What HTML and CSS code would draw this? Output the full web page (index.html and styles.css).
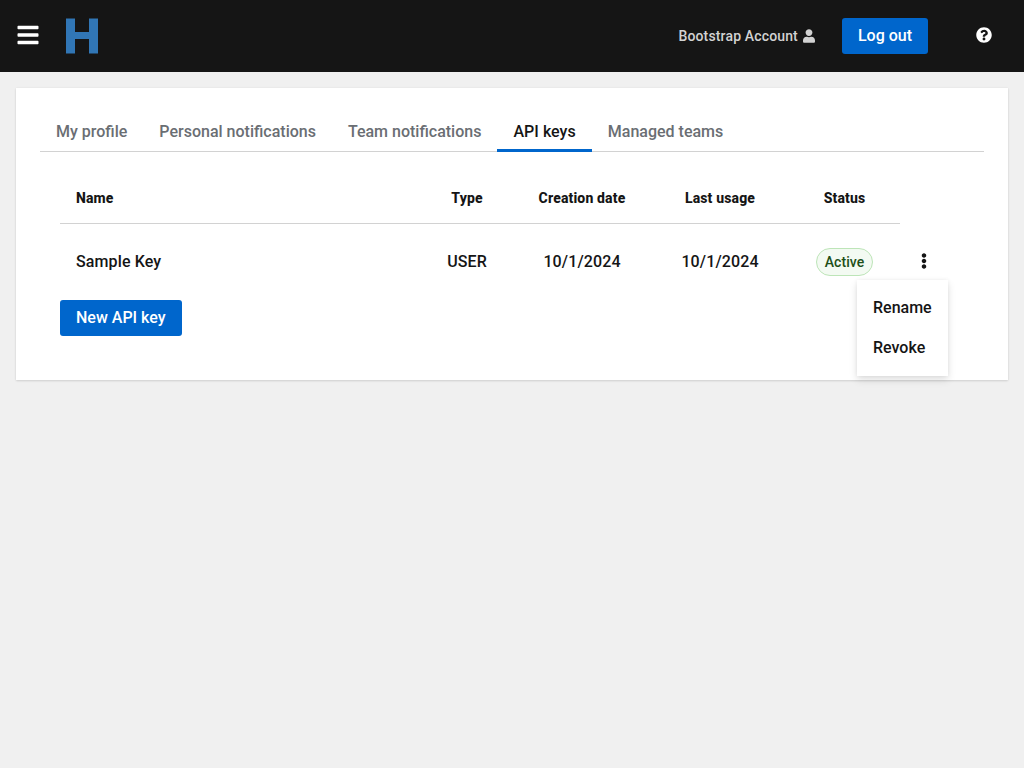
FILE: index.html
```html
<!DOCTYPE html>
<html lang="en">
<head>
<meta charset="utf-8">
<title>API keys</title>
<link rel="stylesheet" href="styles.css">
</head>
<body>
<header class="masthead">
  <button class="icon-button menu" aria-label="Menu"><svg width="22" height="24" viewBox="-10.67 0 469.33 512"><path d="M16 132h416c8.837 0 16-7.163 16-16V76c0-8.837-7.163-16-16-16H16C7.163 60 0 67.163 0 76v40c0 8.837 7.163 16 16 16zm0 160h416c8.837 0 16-7.163 16-16v-40c0-8.837-7.163-16-16-16H16c-8.837 0-16 7.163-16 16v40c0 8.837 7.163 16 16 16zm0 160h416c8.837 0 16-7.163 16-16v-40c0-8.837-7.163-16-16-16H16c-8.837 0-16 7.163-16 16v40c0 8.837 7.163 16 16 16z"/></svg></button>
  <svg class="logo" width="32" height="36" viewBox="0 0 32 36"><path d="M0 .5h9V14h14V.5h9v35h-9V21H9v14.500H0z"/></svg>
  <div class="account">Bootstrap Account <svg width="12" height="14" viewBox="0 0 448 512"><path d="M224 256c70.700 0 128-57.300 128-128S294.700 0 224 0 96 57.300 96 128s57.300 128 128 128zm89.600 32h-16.700c-22.200 10.200-46.900 16-72.900 16s-50.600-5.800-72.900-16h-16.700C60.200 288 0 348.200 0 422.400V464c0 26.500 21.500 48 48 48h352c26.500 0 48-21.500 48-48v-41.600c0-74.200-60.200-134.400-134.400-134.400z"/></svg></div>
  <button class="button logout">Log out</button>
  <button class="icon-button help" aria-label="Help"><svg width="16" height="16" viewBox="0 0 512 512"><path d="M504 256c0 136.997-111.043 248-248 248S8 392.997 8 256C8 119.083 119.043 8 256 8s248 111.083 248 248zM262.655 90c-54.497 0-89.255 22.957-116.549 63.758-3.536 5.286-2.353 12.415 2.715 16.258l34.699 26.310c5.205 3.947 12.621 3.008 16.665-2.122 17.864-22.658 30.113-35.797 57.303-35.797 20.429 0 45.698 13.148 45.698 32.958 0 14.976-12.363 22.667-32.534 33.976C247.128 238.528 216 254.941 216 296v4c0 6.627 5.373 12 12 12h56c6.627 0 12-5.373 12-12v-1.333c0-28.462 83.186-29.647 83.186-106.667 0-58.002-60.165-102-116.531-102zM256 338c-25.365 0-46 20.635-46 46 0 25.364 20.635 46 46 46s46-20.636 46-46c0-25.365-20.635-46-46-46z"/></svg></button>
</header>
<main class="card">
  <nav class="tabs"><a class="tab">My profile</a><a class="tab">Personal notifications</a><a class="tab">Team notifications</a><a class="tab current">API keys</a><a class="tab">Managed teams</a></nav>
  <section class="panel">
    <div class="row head"><div class="name">Name</div><div>Type</div><div>Creation date</div><div>Last usage</div><div>Status</div></div>
    <div class="row"><div class="name">Sample Key</div><div>USER</div><div>10/1/2024</div><div>10/1/2024</div><div><span class="label">Active</span></div>
      <div class="actions"><svg width="6" height="16" viewBox="0 0 192 512"><path d="M96 184c39.800 0 72 32.200 72 72s-32.200 72-72 72-72-32.200-72-72 32.200-72 72-72zM24 80c0 39.800 32.200 72 72 72s72-32.200 72-72S135.800 8 96 8 24 40.200 24 80zm0 352c0 39.800 32.200 72 72 72s72-32.200 72-72-32.200-72-72-72-72 32.200-72 72z"/></svg>
        <div class="dropdown"><a>Rename</a><a>Revoke</a></div>
      </div>
    </div>
    <button class="button">New API key</button>
  </section>
</main>
</body>
</html>
```
FILE: styles.css
```css
* { box-sizing: border-box; }
body { margin: 0; background: #f0f0f0; color: #151515; font: 500 16px/24px Roboto, sans-serif; }
button { font: inherit; border: 0; margin: 0; padding: 0; }
svg { display: block; fill: currentColor; }
.masthead { height: 72px; background: #151515; display: flex; align-items: center; color: #d2d2d2; }
.icon-button { background: none; color: #fff; }
.menu { margin-left: 17px; padding-bottom: 2px; }
.logo { margin-left: 27px; color: #3176b5; }
.account { margin-left: auto; display: flex; align-items: center; gap: 5px; font-size: 14px; letter-spacing: .15px; }
.button { background: #06c; color: #fff; border-radius: 3px; height: 36px; padding: 0 16px; }
.logout { margin-left: 27px; }
.help { margin: 0 32px 2px 48px; }
.card { margin: 16px; height: 292px; padding: 24px; background: #fff; box-shadow: 0 1px 2px rgba(3,3,3,.12), 0 0 2px rgba(3,3,3,.06); }
.tabs { display: flex; height: 40px; border-bottom: 1px solid #d2d2d2; }
.tab { padding: 8px 16px; color: #6a6e73; height: 40px; }
.current { color: #151515; border-bottom: 3px solid #06c; letter-spacing: .04px; }
.panel { padding: 20px; }
.row { display: grid; grid-template-columns: 361px 92px 138px 138px 111px 48px; height: 76px; align-items: center; text-align: center; letter-spacing: .12px; }
.head { width: 840px; height: 52px; border-bottom: 1px solid #d2d2d2; font-size: 14px; font-weight: 800; letter-spacing: .15px; }
.name { text-align: left; padding-left: 16px; }
.label { display: inline-flex; align-items: center; height: 28px; padding: 0 8px; border: 1px solid #bde5b8; border-radius: 14px; background: #f3faf2; color: #1e4f18; font-size: 14px; vertical-align: middle; letter-spacing: .08px; }
.actions { position: relative; display: flex; justify-content: center; padding-bottom: 2px; letter-spacing: 0; }
.dropdown { position: absolute; top: 27px; right: 0; width: 91px; height: 96px; padding: 8px 0; background: #fff; box-shadow: 0 4px 8px rgba(3,3,3,.12), 0 0 4px rgba(3,3,3,.06); text-align: left; }
.dropdown a { display: block; padding: 8px 16px; }
```
